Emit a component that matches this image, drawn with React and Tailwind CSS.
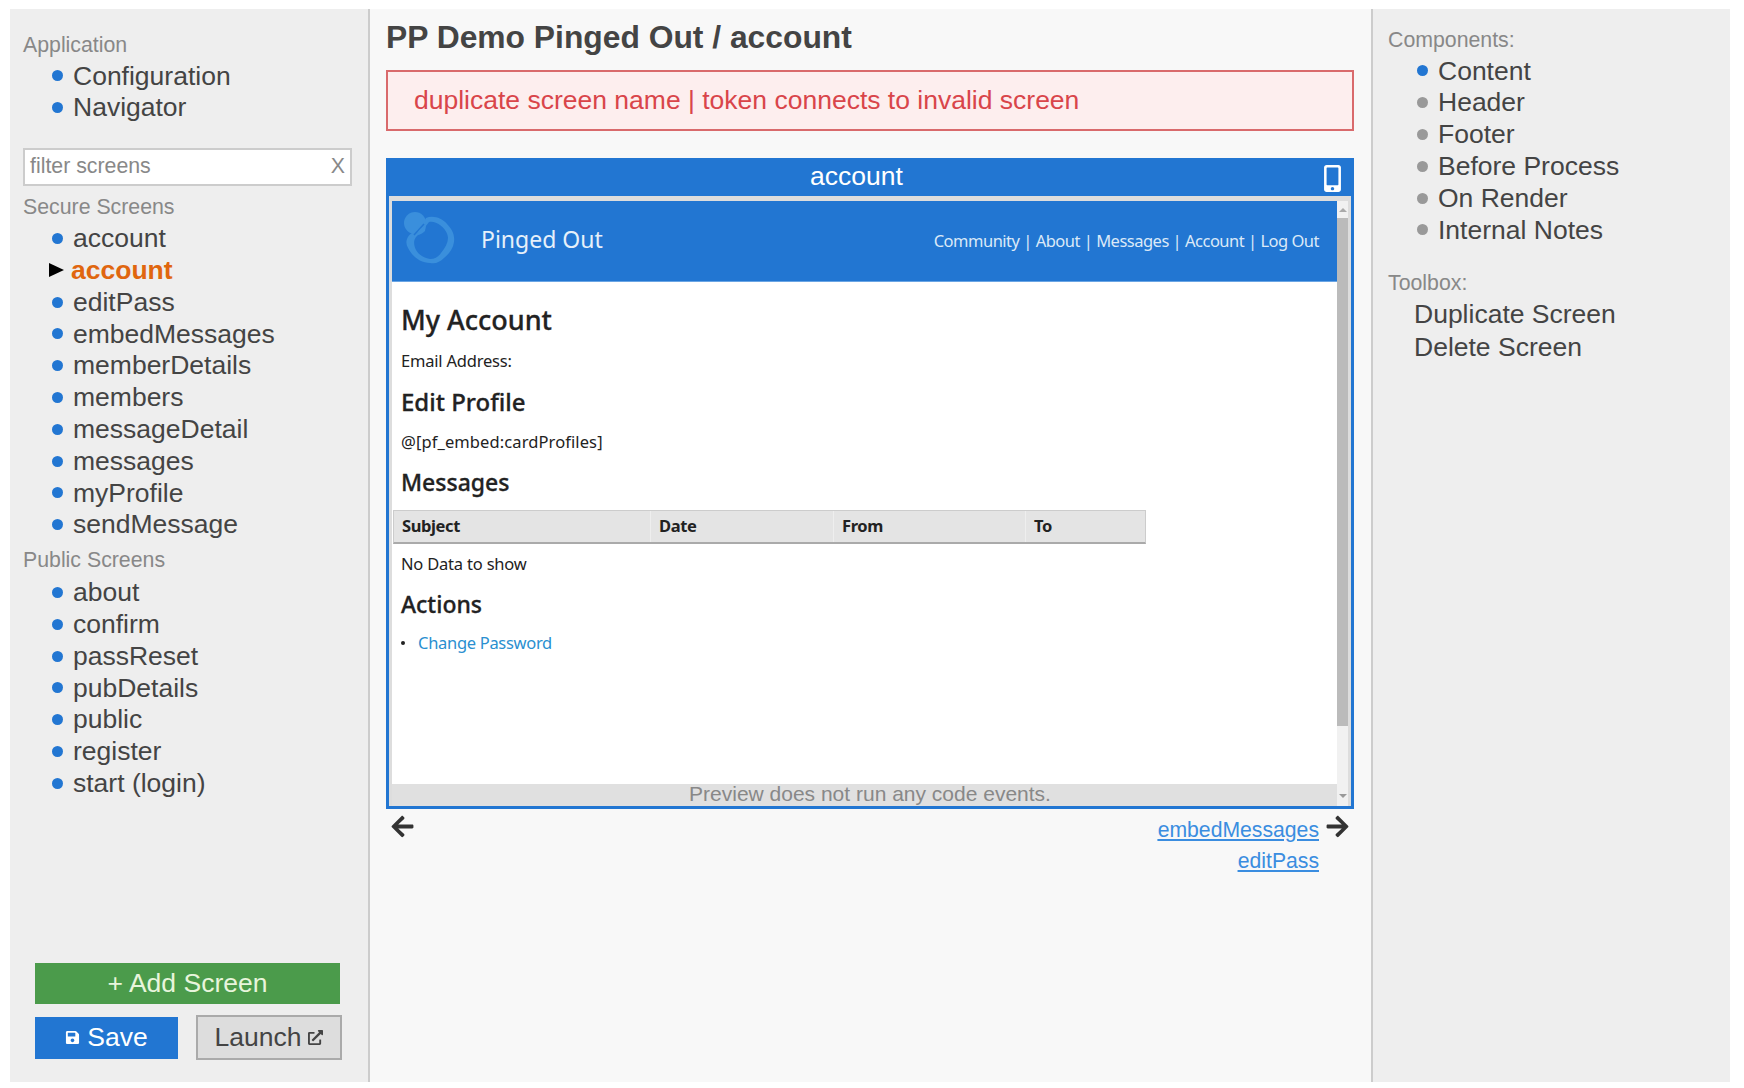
import { FaArrowLeft, FaArrowRight, FaExternalLinkAlt, FaMobileAlt, FaSave } from "react-icons/fa";

const SECURE = ["account", "account", "editPass", "embedMessages", "memberDetails", "members", "messageDetail", "messages", "myProfile", "sendMessage"];
const PUBLIC = ["about", "confirm", "passReset", "pubDetails", "public", "register", "start (login)"];
const COMPONENTS = ["Content", "Header", "Footer", "Before Process", "On Render", "Internal Notes"];
const COLUMNS = [
  { label: "Subject", width: "w-[257px]" },
  { label: "Date", width: "w-[183px]" },
  { label: "From", width: "w-[192px]" },
  { label: "To", width: "flex-1" },
];

const ubuntu = "font-['Noto_Sans',sans-serif]";

function NavItem({ label, muted }) {
  return (
    <li className="flex h-[31.8px] items-center">
      <span className={`ml-[10px] h-[11px] w-[11px] shrink-0 rounded-full ${muted ? "bg-[#999999]" : "bg-[#2276d2]"}`} />
      <span className="ml-[10px] text-[26.5px] leading-none text-[#444444]">{label}</span>
    </li>
  );
}

function ActiveItem({ label }) {
  return (
    <li className="flex h-[31.8px] items-center">
      <span className="ml-[7px] h-0 w-0 border-y-[7px] border-l-[15px] border-y-transparent border-l-black" />
      <span className="ml-[7px] text-[26.5px] font-bold leading-none text-[#e0660f]">{label}</span>
    </li>
  );
}

function Sidebar() {
  return (
    <aside className="flex w-[360px] shrink-0 flex-col border-r-2 border-[#cccccc] bg-[#eeeeee] pb-[22px] pl-[13px] pt-[24px]">
      <h3 className="text-[21.3px] leading-[24px] text-[#888888]">Application</h3>
      <ul className="mt-[3px] pl-[19px]">
        <NavItem label="Configuration" />
        <NavItem label="Navigator" />
      </ul>
      <div className="mt-[24px] flex h-[38px] w-[329px] items-center justify-between border-2 border-[#cccccc] bg-white pl-[5px] pr-[5px] text-[21.3px] text-[#888888]">
        <span className="pt-[1px]">filter screens</span>
        <span>X</span>
      </div>
      <h3 className="mt-[9px] text-[21.3px] leading-[24px] text-[#888888]">Secure Screens</h3>
      <ul className="mt-[4px] pl-[19px]">
        {SECURE.map((name, i) =>
          i === 1 ? <ActiveItem key={i} label={name} /> : <NavItem key={i} label={name} />
        )}
      </ul>
      <h3 className="mt-[7px] text-[21.3px] leading-[24px] text-[#888888]">Public Screens</h3>
      <ul className="mt-[5px] pl-[19px]">
        {PUBLIC.map((name) => (
          <NavItem key={name} label={name} />
        ))}
      </ul>
      <div className="mt-auto pl-[12px]">
        <button type="button" className="h-[41px] w-[305px] bg-[#4b9b4b] text-[26.5px] leading-none text-[#e8f5dc]">
          + Add Screen
        </button>
        <div className="mt-[11px] flex items-center">
          <button type="button" className="flex h-[42px] w-[143px] items-center justify-center gap-[7px] bg-[#2276d2] text-[26.5px] leading-none text-white">
            <FaSave className="h-[15px] w-[15px]" />
            Save
          </button>
          <button type="button" className="ml-[18px] flex h-[45px] w-[146px] items-center justify-center gap-[7px] border-2 border-[#aaaaaa] bg-[#dddddd] text-[26.5px] leading-none text-[#444444]">
            Launch
            <FaExternalLinkAlt className="h-[15px] w-[15px]" />
          </button>
        </div>
      </div>
    </aside>
  );
}

function Logo() {
  return (
    <svg viewBox="0 1 70 81" className="h-[81px] w-[70px] shrink-0">
      <path
        fillRule="evenodd"
        fill="#3a8fdc"
        d="M31 18C38 15 47 18 52 24C57 29 60 35 59 42C58 49 54 54 49 58C45 62 41 64 35 63C28 63 21 59 17 54C13 49 10 44 12 39C13 36 15 34 17 33L26 27ZM34 22L27 31L21 37C18 41 19 46 21 50C24 55 29 58 35 59C40 59 43 57 46 53C50 48 53 43 53 38C53 33 49 28 45 25C42 23 38 21 34 22Z"
      />
      <circle cx="20" cy="23" r="11" fill="#3a8fdc" />
      <path d="M19 35L29 24" stroke="#2276d2" strokeWidth="1.5" fill="none" />
      <path d="M22 35C23 30 27 27 31 26L30 31C28 33 25 35 22 35Z" fill="#3a8fdc" />
    </svg>
  );
}

function Preview() {
  return (
    <div className="mt-[27px] border-[3px] border-[#2276d2] bg-white">
      <div className="relative flex h-[35px] items-center justify-center bg-[#2276d2] pb-[4px] text-[26.5px] leading-none text-white">
        <span className="mr-[27px]">account</span>
        <FaMobileAlt className="absolute right-[8px] top-[4px] h-[27px] w-[21px]" />
      </div>
      <div className="relative flex h-[610px] border-x-[3px] border-t-[5px] border-[#dddddd]">
        <div className={`flex-1 ${ubuntu} text-[#222222]`}>
          <div className="flex h-[81px] items-center justify-between border-b border-[#6aa5e4] bg-[#2276d2] pl-[3px] pr-[18px]">
            <div className="flex items-center">
              <Logo />
              <span className="mb-[3px] ml-[16px] text-[23px] text-[#e6f0fa]">Pinged Out</span>
            </div>
            <span className="mt-[1px] text-[16.5px] tracking-[-0.5px] text-[#dbe9f8]">Community | About | Messages | Account | Log Out</span>
          </div>
          <div className="px-[9px]">
            <h1 className="mt-[20px] text-[27px] font-medium leading-[36px] [-webkit-text-stroke:0.3px_#222222]">My Account</h1>
            <p className="mt-[11px] text-[16.5px] leading-[24px] tracking-[-0.2px]">Email Address:</p>
            <h2 className="mt-[13px] text-[24px] font-medium leading-[32px] [-webkit-text-stroke:0.3px_#222222]">Edit Profile</h2>
            <p className="mt-[12px] text-[16.5px] leading-[24px] tracking-[0.1px]">@[pf_embed:cardProfiles]</p>
            <h2 className="mt-[12px] text-[23px] font-medium leading-[32px] [-webkit-text-stroke:0.3px_#222222]">Messages</h2>
            <div className="-ml-[8px] mt-[12px] flex h-[34px] w-[753px] items-center border border-b-2 border-[#cccccc] border-b-[#aaaaaa] bg-[#e4e4e4] text-[16.5px] font-bold tracking-[-0.4px]">
              {COLUMNS.map((col) => (
                <div key={col.label} className={`flex h-full items-center border-r border-[#eeeeee] pl-[8px] last:border-r-0 ${col.width}`}>
                  {col.label}
                </div>
              ))}
            </div>
            <p className="mt-[8px] text-[16.5px] leading-[24px] tracking-[-0.2px]">No Data to show</p>
            <h2 className="mt-[12px] text-[23px] font-medium leading-[32px] [-webkit-text-stroke:0.3px_#222222]">Actions</h2>
            <ul className="mt-[11px] flex items-center text-[16.5px] leading-[24px] tracking-[-0.3px]">
              <li className="flex items-center">
                <span className="h-[4px] w-[4px] rounded-full bg-[#222222]" />
                <span className="ml-[13px] text-[#2a8fd0]">Change Password</span>
              </li>
            </ul>
          </div>
        </div>
        <div className="relative z-10 flex w-[11px] shrink-0 flex-col items-center bg-[#f1f1f1]">
          <span className="mt-[7px] h-0 w-0 border-x-[4px] border-b-[4px] border-x-transparent border-b-[#aaaaaa]" />
          <div className="mt-[6px] h-[508px] w-full bg-[#bbbbbb]" />
          <span className="mb-[8px] mt-auto h-0 w-0 border-x-[4px] border-t-[4px] border-x-transparent border-t-[#999999]" />
        </div>
        <div className="absolute inset-x-0 bottom-0 flex h-[22px] items-center justify-center bg-[#e0e0e0] pb-[3px] text-[21px] leading-none text-[#888888]">
          Preview does not run any code events.
        </div>
      </div>
    </div>
  );
}

function Main() {
  return (
    <main className="flex-1 bg-[#f8f8f8] pl-[16px] pr-[17px] pt-[10px]">
      <h1 className="text-[31.8px] font-bold leading-[36px] text-[#444444]">PP Demo Pinged Out / account</h1>
      <div className="mt-[15px] flex h-[61px] items-center border-2 border-[#d96a6c] bg-[#fdeeee] pl-[26px] text-[26.5px] leading-none text-[#d9454a]">
        duplicate screen name | token connects to invalid screen
      </div>
      <Preview />
      <div className="mt-[2px] flex items-start justify-between pl-[4px] pr-[4px]">
        <FaArrowLeft className="mt-[3px] h-[25px] w-[25px] text-[#333333]" />
        <div className="flex items-start">
          <div className="flex flex-col items-end text-[21.2px] leading-[31px] text-[#3a8de0] underline">
            <a href="#embedMessages" className="mt-[3px]">embedMessages</a>
            <a href="#editPass">editPass</a>
          </div>
          <FaArrowRight className="ml-[6px] mt-[3px] h-[25px] w-[25px] text-[#333333]" />
        </div>
      </div>
    </main>
  );
}

function RightPanel() {
  return (
    <aside className="w-[359px] shrink-0 border-l-2 border-[#cccccc] bg-[#eeeeee] pl-[15px] pt-[19px]">
      <h3 className="text-[21.3px] leading-[24px] text-[#888888]">Components:</h3>
      <ul className="mt-[3px] pl-[19px]">
        {COMPONENTS.map((name, i) => (
          <NavItem key={name} label={name} muted={i > 0} />
        ))}
      </ul>
      <h3 className="mt-[25px] text-[21.3px] leading-[24px] text-[#888888]">Toolbox:</h3>
      <ul className="mt-[3px] pl-[26px] text-[26.5px] leading-[33px] text-[#444444]">
        <li>Duplicate Screen</li>
        <li>Delete Screen</li>
      </ul>
    </aside>
  );
}

export default function App() {
  return (
    <div className="flex h-[1088px] w-full overflow-hidden bg-white pb-[6px] pl-[10px] pr-[14px] pt-[9px] font-['Liberation_Sans',Arial,sans-serif]">
      <Sidebar />
      <Main />
      <RightPanel />
    </div>
  );
}
